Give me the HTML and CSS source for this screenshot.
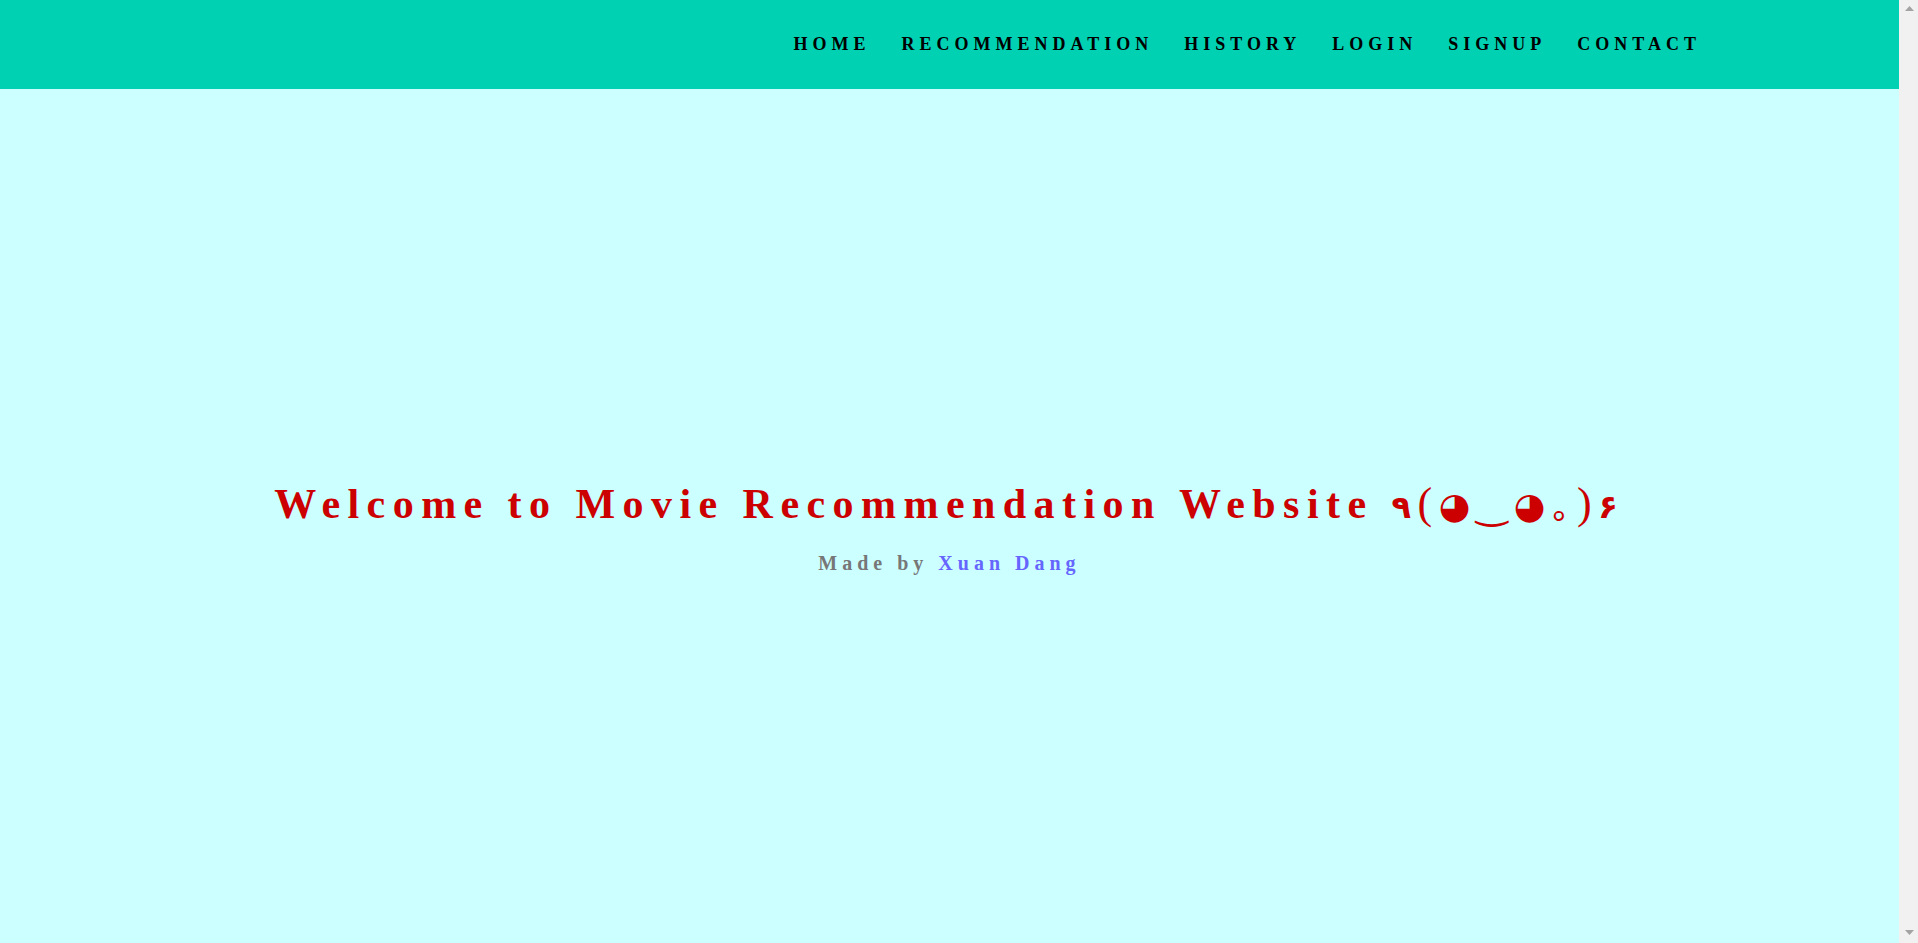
FILE: index.html
```html
<!DOCTYPE html>
<html lang="en">
<head>
<meta charset="utf-8">
<title>Movie Recommendation</title>
<link rel="stylesheet" href="styles.css">
</head>
<body>
<div class="page">
  <main class="main">
    <nav class="navbar">
      <ul class="nav-menu">
        <li><a class="nav-link" href="#">HOME</a></li>
        <li><a class="nav-link" href="#">RECOMMENDATION</a></li>
        <li><a class="nav-link" href="#">HISTORY</a></li>
        <li><a class="nav-link" href="#">LOGIN</a></li>
        <li><a class="nav-link" href="#">SIGNUP</a></li>
        <li><a class="nav-link" href="#">CONTACT</a></li>
      </ul>
    </nav>
    <section class="hero">
      <div class="hero-body">
        <h1 class="title">Welcome to Movie Recommendation Website <span class="kaomoji"><span class="kao kao-digit">٩</span><span class="kao kao-paren">(</span><span class="kao kao-eye">◕</span><span class="kao kao-mouth">‿</span><span class="kao kao-eye">◕</span><span class="kao kao-dot">｡</span><span class="kao kao-paren">)</span><span class="kao kao-digit">۶</span></span></h1>
        <p class="subtitle">Made by <span class="author">Xuan Dang</span></p>
      </div>
    </section>
  </main>
  <div class="scrollbar" aria-hidden="true">
    <svg class="arrow" width="9" height="5" viewBox="0 0 9 5"><polygon points="4.5,0 9,5 0,5" fill="#a3a3a3"/></svg>
    <svg class="arrow" width="9" height="5" viewBox="0 0 9 5"><polygon points="0,0 9,0 4.5,5" fill="#a3a3a3"/></svg>
  </div>
</div>
</body>
</html>
```

FILE: styles.css
```css
html, body {
  margin: 0;
  padding: 0;
}
body {
  background: #ccffff;
  font-family: "Liberation Serif", "Times New Roman", serif;
}
.page {
  display: flex;
  height: 100vh;
  overflow: hidden;
}
.main {
  flex: 1;
  min-width: 0;
  overflow: hidden;
}
.scrollbar {
  width: 19px;
  flex: none;
  background: #f1f1f1;
  display: flex;
  flex-direction: column;
  justify-content: space-between;
  align-items: center;
  padding: 6px 0 8px;
  box-sizing: border-box;
}
.arrow {
  display: block;
  margin-left: 1px;
}
.navbar {
  background: #00d1b2;
  height: 89px;
  display: flex;
  align-items: center;
  justify-content: flex-end;
  padding-right: 198px;
}
.nav-menu {
  list-style: none;
  margin: 0;
  padding: 0;
  display: flex;
  gap: 31px;
}
.nav-link {
  color: #000;
  text-decoration: none;
  font-weight: bold;
  font-size: 18px;
  letter-spacing: 5px;
}
.hero {
  min-height: 100vh;
  display: flex;
  align-items: center;
  justify-content: center;
  padding-bottom: 68px;
  box-sizing: border-box;
}
.hero-body {
  text-align: center;
}
.title {
  margin: 0;
  color: #cc0000;
  font-size: 42px;
  font-weight: bold;
  letter-spacing: 7.45px;
  line-height: 50px;
}
.kaomoji {
  display: inline-flex;
  align-items: baseline;
  gap: 6.5px;
  font-family: "DejaVu Sans", sans-serif;
  font-weight: normal;
  font-size: 38px;
  letter-spacing: 0;
  margin-right: 7px;
}
.kao {
  display: inline-block;
}
.kao-paren {
  font-family: "Liberation Serif", serif;
  font-size: 44px;
}
.kao-digit {
  font-weight: bold;
  font-size: 32px;
}
.kao-eye {
  font-size: 36px;
}
.subtitle {
  margin: 20px 0 0;
  color: #777777;
  font-size: 20px;
  font-weight: bold;
  letter-spacing: 5px;
  line-height: 23px;
}
.author {
  color: #6666ff;
}
```
